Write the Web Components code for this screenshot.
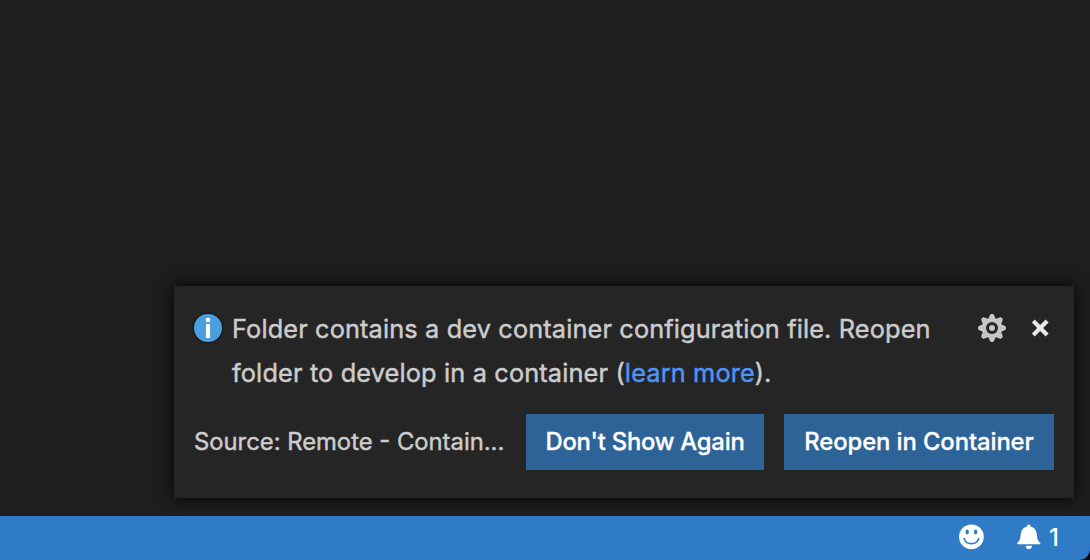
<!DOCTYPE html>
<html lang="en">
<head>
<meta charset="utf-8">
<title>Notification</title>
<style>
html,body{margin:0;height:100%;background:#1e1e1e;overflow:hidden}
</style>
</head>
<body>
<editor-window></editor-window>
<script>
const define = (name, html) => customElements.define(name, class extends HTMLElement {
  constructor() {
    super();
    const t = document.createElement('template');
    t.innerHTML = html;
    this.attachShadow({ mode: 'open' }).append(t.content.cloneNode(true));
  }
});

define('info-icon', `<style>:host{display:block;width:32px;height:32px}svg{display:block}</style>
<svg width="32" height="32" viewBox="0 0 32 32"><circle cx="16" cy="16" r="15.6" fill="#1b1b1b"/><circle cx="16" cy="16" r="14" fill="#4a9fde"/><path d="M14 6h4v4h-4zM14 12h4v14h-4z" fill="#fff"/></svg>`);

define('gear-icon', `<style>:host{display:block;width:32px;height:32px}svg{display:block}</style>
<svg width="32" height="32" viewBox="0 0 32 32"><defs><path id="t" d="M11.6 8.5 L13.7 3.4 Q14.2 2 15.2 2 H16.8 Q17.8 2 18.3 3.4 L20.4 8.5z"/></defs>
<g fill="#c5c5c5"><use href="#t"/><use href="#t" transform="rotate(45 16 16)"/><use href="#t" transform="rotate(90 16 16)"/><use href="#t" transform="rotate(135 16 16)"/><use href="#t" transform="rotate(180 16 16)"/><use href="#t" transform="rotate(225 16 16)"/><use href="#t" transform="rotate(270 16 16)"/><use href="#t" transform="rotate(315 16 16)"/>
<circle cx="16" cy="16" r="10"/></g><circle cx="16" cy="16" r="6" fill="#252526"/><circle cx="16" cy="16" r="3" fill="#c5c5c5"/></svg>`);

define('close-icon', `<style>:host{display:block;width:32px;height:32px}svg{display:block}</style>
<svg width="32" height="32" viewBox="0 0 32 32"><path d="M9.3 9.1L23.1 22.9M23.1 9.1L9.3 22.9" stroke="#e8e8e8" stroke-width="4.2"/></svg>`);

define('smiley-icon', `<style>:host{display:block;width:26px;height:26px}svg{display:block}</style>
<svg width="26" height="26" viewBox="0 0 26 26"><circle cx="13.4" cy="12.8" r="12.4" fill="#fff"/><g fill="#307bc6"><ellipse cx="9.2" cy="8" rx="1.7" ry="2.4"/><ellipse cx="17.6" cy="8" rx="1.7" ry="2.4"/></g><path d="M6.2 14.6C8 21.4 18.8 21.4 20.6 14.6" fill="none" stroke="#307bc6" stroke-width="1.7" stroke-linecap="round"/></svg>`);

define('bell-icon', `<style>:host{display:block;width:24px;height:26px}svg{display:block}</style>
<svg width="24" height="26" viewBox="0 0 24 26"><path fill="#fff" d="M11.8.6c1 0 1.6.7 1.8 1.9 3.7.9 5.8 3.6 6.2 7.4.4 4 .6 6.6 3.5 8.9v1.4H.3v-1.4c2.9-2.3 3.1-4.9 3.5-8.9.4-3.8 2.5-6.5 6.2-7.4.2-1.2.8-1.9 1.8-1.9zM8.6 21.7h6.4c-.1 2.1-1.5 3.5-3.2 3.5s-3.1-1.4-3.2-3.5z"/></svg>`);

define('action-button', `<style>
:host{display:flex;align-items:center;justify-content:center;box-sizing:border-box;height:56px;background:#2d6397;color:#fff;font:500 23.8px/56px Inter,sans-serif;white-space:nowrap;flex:none;-webkit-text-stroke:.3px currentColor}
span{letter-spacing:var(--tracking,0)}</style><span><slot></slot></span>`);

define('notification-toast', `<style>
:host{display:flex;flex-direction:column;box-sizing:border-box;width:900px;height:212px;padding:20px 20px 28px;background:#252526;box-shadow:0 0 16px #000;color:#ccc;font-family:Inter,sans-serif;-webkit-text-stroke:.45px currentColor}
.main{display:flex;height:88px}
info-icon{margin:6px 8px 0 -2px;flex:none}
.msg{flex:none;width:716px;padding-top:1px;font-size:25.3px;line-height:44px;white-space:nowrap}
.msg div{height:44px}
.l1{letter-spacing:.14px}.l2{letter-spacing:.155px}
a{color:#4e94f8;text-decoration:none}
.tools{display:flex;flex:none;gap:16px;padding:6px 0 0 28px;margin-right:-2px}
.details{display:flex;align-items:center;margin-top:20px;height:56px}
.source{flex:1;font-size:23.8px;line-height:56px;white-space:nowrap}
action-button+action-button{margin-left:20px}
</style>
<div class="main"><info-icon></info-icon>
<div class="msg"><div class="l1">Folder contains a dev container configuration file. Reopen</div><div class="l2">folder to develop in a container (<a>learn more</a>).</div></div>
<div class="tools"><gear-icon></gear-icon><close-icon></close-icon></div></div>
<div class="details"><div class="source">Source: Remote - Contain...</div>
<action-button style="width:238px;--tracking:-.22px">Don't Show Again</action-button><action-button style="width:270px;--tracking:-.08px">Reopen in Container</action-button></div>`);

define('status-bar', `<style>
:host{display:flex;justify-content:flex-end;box-sizing:border-box;height:44px;padding:8px 29px 0 0;background:#307bc6;border-bottom-right-radius:11px;color:#fff;font:500 23.8px/28px Inter,sans-serif}
bell-icon{margin-left:33px}span{width:12px;margin-left:8px;white-space:nowrap}
</style><smiley-icon></smiley-icon><bell-icon></bell-icon><span>1</span>`);

define('editor-window', `<style>
:host{display:flex;flex-direction:column;width:1090px;height:560px;background:#1e1e1e}
.area{flex:1;display:flex;justify-content:flex-end;align-items:flex-end;padding:0 16px 18px;overflow:hidden}
.foot{background:#080808}
</style><div class="area"><notification-toast></notification-toast></div><div class="foot"><status-bar></status-bar></div>`);
</script>
</body>
</html>
